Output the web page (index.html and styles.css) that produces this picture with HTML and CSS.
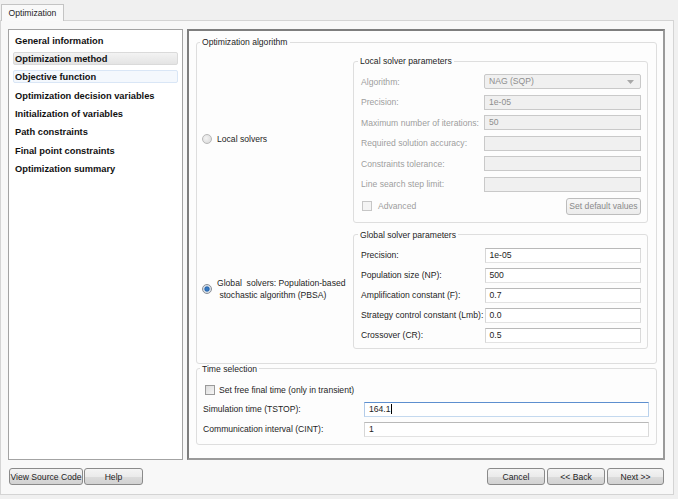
FILE: index.html
```html
<!DOCTYPE html>
<html>
<head>
<meta charset="utf-8">
<link rel="stylesheet" href="styles.css">
</head>
<body>
<div class="tabs"><div class="tab">Optimization</div></div>
<div class="pane">
  <div class="main">
    <ul class="nav">
      <li class="item">General information</li>
      <li class="item selected">Optimization method</li>
      <li class="item hover">Objective function</li>
      <li class="item">Optimization decision variables</li>
      <li class="item">Initialization of variables</li>
      <li class="item">Path constraints</li>
      <li class="item">Final point constraints</li>
      <li class="item">Optimization summary</li>
    </ul>
    <div class="frame">
      <fieldset class="group algo">
        <legend>Optimization algorithm</legend>
        <div class="algo-grid">
          <div class="radio-opt"><span class="radio"></span><span class="radio-text">Local solvers</span></div>
          <fieldset class="group sub local">
            <legend>Local solver parameters</legend>
            <div class="form local-form">
              <span class="lbl dis">Algorithm:</span>
              <div class="input dis combo">NAG (SQP)<svg class="arrow" width="7" height="4" viewBox="0 0 7 4"><path d="M0 0H7L3.5 4Z" fill="#a8a8a8"/></svg></div>
              <span class="lbl dis">Precision:</span>
              <div class="input dis">1e-05</div>
              <span class="lbl dis">Maximum number of iterations:</span>
              <div class="input dis">50</div>
              <span class="lbl dis">Required solution accuracy:</span>
              <div class="input dis"></div>
              <span class="lbl dis">Constraints tolerance:</span>
              <div class="input dis"></div>
              <span class="lbl dis">Line search step limit:</span>
              <div class="input dis"></div>
              <div class="adv-row">
                <span class="check-opt dis"><span class="checkbox dis"></span>Advanced</span>
                <span class="btn small dis">Set default values</span>
              </div>
            </div>
          </fieldset>
          <div class="radio-opt"><span class="radio checked"></span><span class="radio-text">Global&nbsp; solvers: Population-based<br>&nbsp;stochastic algorithm (PBSA)</span></div>
          <fieldset class="group sub global">
            <legend>Global solver parameters</legend>
            <div class="form global-form">
              <span class="lbl">Precision:</span>
              <div class="input">1e-05</div>
              <span class="lbl">Population size (NP):</span>
              <div class="input">500</div>
              <span class="lbl">Amplification constant (F):</span>
              <div class="input">0.7</div>
              <span class="lbl">Strategy control constant (Lmb):</span>
              <div class="input">0.0</div>
              <span class="lbl">Crossover (CR):</span>
              <div class="input">0.5</div>
            </div>
          </fieldset>
        </div>
      </fieldset>
      <fieldset class="group time">
        <legend>Time selection</legend>
        <div class="form time-form">
          <span class="check-opt full"><span class="checkbox"></span>Set free final time (only in transient)</span>
          <span class="lbl">Simulation time (TSTOP):</span>
          <div class="input focus">164.1<span class="caret"></span></div>
          <span class="lbl">Communication interval (CINT):</span>
          <div class="input">1</div>
        </div>
      </fieldset>
    </div>
  </div>
  <div class="buttons">
    <div class="btn-group">
      <span class="btn w74">View Source Code</span>
      <span class="btn w59">Help</span>
    </div>
    <div class="btn-group right">
      <span class="btn w58">Cancel</span>
      <span class="btn w58">&lt;&lt; Back</span>
      <span class="btn w57">Next &gt;&gt;</span>
    </div>
  </div>
</div>
</body>
</html>
```
FILE: styles.css
```css
* { box-sizing: border-box; }
html, body { margin: 0; padding: 0; }
body {
  width: 678px;
  height: 499px;
  overflow: hidden;
  background: #f0f0f0;
  font-family: "Liberation Sans", Arial, sans-serif;
  font-size: 8.6px;
  color: #1e1e1e;
}
.tabs {
  height: 20px;
  padding-left: 1px;
  display: flex;
  align-items: flex-end;
}
.tab {
  position: relative;
  z-index: 1;
  width: 63px;
  height: 17px;
  margin-bottom: -1px;
  border: 1px solid #c4c4c4;
  border-bottom: none;
  background: #f9f9f9;
  text-align: center;
  line-height: 16px;
}
.pane {
  width: 674px;
  height: 475px;
  border: 1px solid #d4d4d4;
  background: #f8f8f8;
  padding: 8px 0 0 7px;
}
.main {
  display: flex;
  gap: 4px;
  height: 431px;
}
.nav {
  list-style: none;
  margin: 0;
  width: 175px;
  height: 100%;
  border: 1px solid #a3a3a3;
  background: #fff;
  padding: 3.5px 4px 0 3.5px;
}
.item {
  height: 13px;
  line-height: 13px;
  margin-bottom: 5.4px;
  padding-left: 1.5px;
  font-weight: bold;
  font-size: 9.3px;
  color: #111;
  border: 1px solid transparent;
  border-radius: 2px;
}
.item.selected {
  background: linear-gradient(#f3f3f3, #e4e4e4);
  border-color: #dadada;
}
.item.hover {
  background: #f4f8fd;
  border-color: #d9e6f6;
}
.frame {
  width: 478px;
  height: 100%;
  border: 2px solid #7e7e7e;
  border-right-color: #9a9a9a;
  border-bottom-color: #9a9a9a;
  background: #fdfdfd;
  padding: 6px 6px 0 7px;
}
fieldset.group {
  margin: 0;
  border: 1px solid #dedede;
  border-radius: 3px;
  min-width: 0;
}
fieldset.group legend {
  padding: 0 2px;
  margin-left: 3px;
  line-height: 10px;
  color: #1e1e1e;
}
.algo {
  padding: 0 8px 14px 0;
}
.algo-grid {
  display: grid;
  grid-template-columns: 156px 295px;
  row-gap: 7px;
  margin-top: 9px;
}
.radio-opt {
  display: flex;
  align-items: center;
  padding-left: 5px;
}
.radio {
  width: 10px;
  height: 10px;
  border-radius: 50%;
  border: 1px solid #b8b8b8;
  background: radial-gradient(circle at 40% 40%, #f4f4f4, #d6d6d6);
  flex: none;
  margin-right: 5px;
}
.radio.checked {
  border-color: #8a8f96;
  background: radial-gradient(circle, #3d7fc4 0, #2a6bb5 2.2px, #cfd8e2 3px, #e9eef3 5px);
}
.radio-text {
  line-height: 12px;
}
.sub {
  padding: 0 6px 7px 7px;
}
.sub.local legend, .sub.global legend {
  margin-left: -3px;
}
.form {
  display: grid;
  align-items: center;
}
.local-form {
  grid-template-columns: 123px 157px;
  row-gap: 5.6px;
  margin-top: 8px;
}
.global-form {
  grid-template-columns: 123.5px 156.5px;
  row-gap: 5px;
  margin-top: 8px;
}
.sub.global { padding-bottom: 5px; }
.lbl {
  white-space: nowrap;
  color: #1e1e1e;
}
.lbl.dis { color: #9d9d9d; }
.input {
  height: 15px;
  line-height: 13px;
  padding-left: 4px;
  border: 1px solid;
  border-color: #b9b9b9 #dadada #e2e2e2 #d6d6d6;
  background: #fff;
  color: #1e1e1e;
  position: relative;
}
.input.dis {
  background: #f0f0f0;
  border-color: #c9c9c9;
  color: #8e8e8e;
}
.combo {
  display: flex;
  justify-content: space-between;
  align-items: center;
  padding-right: 6px;
  border-radius: 2px;
}
.adv-row {
  grid-column: 1 / span 2;
  display: flex;
  justify-content: space-between;
  align-items: center;
  padding-left: 1px;
}
.check-opt {
  display: flex;
  align-items: center;
  gap: 6px;
}
.check-opt.dis { color: #9d9d9d; }
.checkbox {
  width: 10px;
  height: 10px;
  border: 1px solid #9a9a9a;
  background: linear-gradient(135deg, #dcdcdc, #f6f6f6);
  flex: none;
}
.checkbox.dis {
  border-color: #c6c6c6;
  background: #f4f4f4;
}
.btn {
  display: flex;
  align-items: center;
  justify-content: center;
  height: 17px;
  border: 1px solid #8a8a8a;
  border-radius: 3px;
  background: linear-gradient(#f4f4f4 0, #ebebeb 50%, #dcdcdc 51%, #d2d2d2 100%);
  color: #1e1e1e;
  white-space: nowrap;
}
.btn.small {
  width: 75px;
  height: 17px;
  border-color: #bdbdbd;
  background: linear-gradient(#f7f7f7, #ececec);
  color: #8a8a8a;
}
.time {
  margin-top: 5px;
  padding: 0 7px 7px 6px;
}
.time legend { margin-left: -3px !important; }
.time-form {
  grid-template-columns: 161px 285px;
  row-gap: 5px;
  margin-top: 9px;
}
.check-opt.full {
  grid-column: 1 / span 2;
  padding-left: 2px;
  height: 14px;
  gap: 4px;
}
.time-form .input { height: 15px; }
.input.focus {
  border-color: #5d8fcf #b9d1ec #c4d9ef #b3cbe8;
}
.caret {
  display: inline-block;
  width: 1px;
  height: 10px;
  background: #000;
  vertical-align: -2px;
  margin-left: 0;
}
.buttons {
  display: flex;
  justify-content: space-between;
  margin-top: 8px;
  padding-right: 9px;
  padding-left: 1px;
}
.btn-group { display: flex; gap: 1px; }
.btn-group.right { gap: 2px; }
.w74 { width: 74px; }
.w59 { width: 59px; }
.w58 { width: 58px; }
.w57 { width: 57px; }
```
